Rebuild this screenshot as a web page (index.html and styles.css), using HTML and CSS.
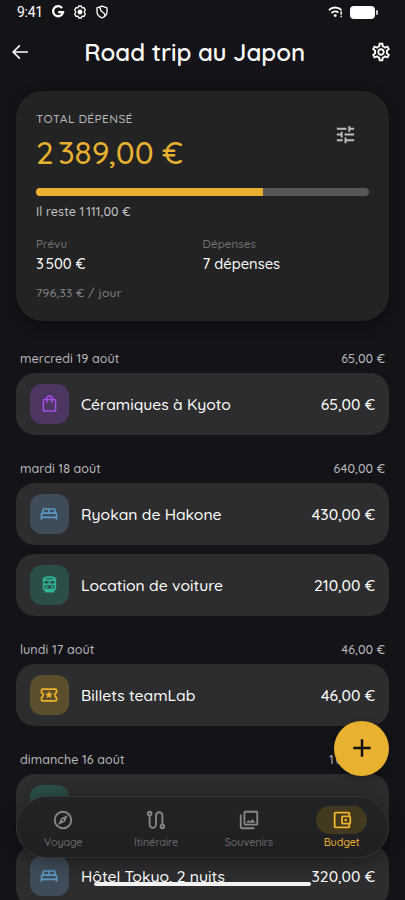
FILE: index.html
```
<!DOCTYPE html>
<html lang="fr">
<head>
<meta charset="utf-8">
<meta name="viewport" content="width=device-width, initial-scale=1">
<title>Road trip au Japon</title>
<link rel="stylesheet" href="styles.css">
</head>
<body>
<svg class="defs" width="0" height="0">
  <symbol id="gear" viewBox="0 0 24 24"><path d="M19.43 12.98c.04-.32.07-.64.07-.98 0-.34-.03-.66-.07-.98l2.11-1.65c.19-.15.24-.42.12-.64l-2-3.46c-.09-.16-.26-.25-.44-.25-.06 0-.12.01-.17.03l-2.49 1c-.52-.4-1.08-.73-1.69-.98l-.38-2.65C14.46 2.18 14.25 2 14 2h-4c-.25 0-.46.18-.49.42l-.38 2.65c-.61.25-1.17.59-1.69.98l-2.49-1c-.06-.02-.12-.03-.18-.03-.17 0-.34.09-.43.25l-2 3.46c-.13.22-.07.49.12.64l2.11 1.65c-.04.32-.07.65-.07.98 0 .33.03.66.07.98l-2.11 1.65c-.19.15-.24.42-.12.64l2 3.46c.09.16.26.25.44.25.06 0 .12-.01.17-.03l2.49-1c.52.4 1.08.73 1.69.98l.38 2.65c.03.24.24.42.49.42h4c.25 0 .46-.18.49-.42l.38-2.65c.61-.25 1.17-.59 1.69-.98l2.49 1c.06.02.12.03.18.03.17 0 .34-.09.43-.25l2-3.46c.12-.22.07-.49-.12-.64l-2.11-1.65zm-1.98-1.71c.04.31.05.52.05.73 0 .21-.02.43-.05.73l-.14 1.13.89.7 1.08.84-.7 1.21-1.27-.51-1.04-.42-.9.68c-.43.32-.84.56-1.25.73l-1.06.43-.16 1.13-.2 1.35h-1.4l-.19-1.35-.16-1.13-1.06-.43c-.43-.18-.83-.41-1.23-.71l-.91-.7-1.06.43-1.27.51-.7-1.21 1.08-.84.89-.7-.14-1.13c-.03-.31-.05-.54-.05-.74s.02-.43.05-.73l.14-1.13-.89-.7-1.08-.84.7-1.21 1.27.51 1.04.42.9-.68c.43-.32.84-.56 1.25-.73l1.06-.43.16-1.13.2-1.35h1.39l.19 1.35.16 1.13 1.06.43c.43.18.83.41 1.23.71l.91.7 1.06-.43 1.27-.51.7 1.21-1.07.85-.89.7.14 1.13zM12 8c-2.21 0-4 1.79-4 4s1.79 4 4 4 4-1.79 4-4-1.79-4-4-4zm0 6c-1.1 0-2-.9-2-2s.9-2 2-2 2 .9 2 2-.9 2-2 2z"/></symbol>
  <symbol id="bed" viewBox="0 0 24 24"><path d="M22 12c0-1.100-.9-2-2-2V7c0-1.100-.9-2-2-2H6c-1.100 0-2 .9-2 2v3c-1.100 0-2 .9-2 2v5h0v2h1.800v-2h16.400v2H22v-7zm-4-2h-5V7h5v3zM6 7h5v3H6V7zm-2 5h16v3H4v-3z"/></symbol>
  <symbol id="train" viewBox="0 0 24 24"><path fill-rule="evenodd" d="M12 1.500C7 1.500 3.500 2.500 3.500 6V16.500c0 1.900 1.300 3.200 3 3.500L6 21v1h12v-1l-.5-1c1.700-.3 3-1.600 3-3.500V6C20.500 2.500 17 1.500 12 1.500zM7.500 4h9v1.300h-9zM5.700 7.500H11v3.300H5.700zm7.300 0h5.300v3.300H13zM5.700 13h12.600v4H5.700z"/><circle cx="8.500" cy="15" r="1.300"/><circle cx="15.500" cy="15" r="1.300"/></symbol>
</svg>
<div class="screen">
  <div class="statusbar">
    <div class="status-left">
      <span class="clock">9:41</span>
      <svg width="14" height="14" viewBox="0 0 14 14" fill="none" stroke="#fff" stroke-width="2.300"><path d="M11 3.100A5 5 0 1 0 12 7.200H7.200"/></svg>
      <svg width="14" height="14" viewBox="0 0 14 14" fill="none" stroke="#fff" stroke-width="1.300" stroke-linejoin="round"><path d="M5.100 2.900L5.800 1h2.400l.7 1.900 2.100-.2 1.300 2.100L11.200 7l1.100 2.200-1.300 2.100-2.100-.2-.7 1.900H5.800l-.7-1.900-2.100.2-1.300-2.100L2.800 7 1.700 4.800 3 2.700z"/><circle cx="7" cy="7" r="1.800" fill="#fff"/></svg>
      <svg width="14" height="14" viewBox="0 0 14 14" fill="none" stroke="#fff" stroke-width="1.300" stroke-linejoin="round"><path d="M7 1.200L2 2.800v3.700c0 3 2 5.300 5 6.300 3-1 5-3.300 5-6.300V2.800zM5 2c0 3.200 1 4.200 2.800 5.200S10 9.200 9.900 11"/></svg>
    </div>
    <div class="status-right">
      <svg width="15" height="12" viewBox="0 0 15 12" fill="none" stroke="#fff" stroke-width="1.800"><path d="M.9 4.100C4.400.600 10 .600 13.500 4.100M3.600 7C5.600 5 8.500 5 10.300 6.600"/><circle cx="7.200" cy="9.600" r="1.400" fill="#fff" stroke="none"/><path d="M13.200 5.300v3.500M13.200 9.800v1.400" stroke-width="1.400"/></svg>
      <span class="battery"></span>
    </div>
  </div>

  <header class="appbar">
    <svg class="back" viewBox="0 0 24 24"><path d="M20 11.100H6.800l5.600-5.700L11.200 4.200l-7.900 7.800 7.900 7.800 1.200-1.200-5.600-5.700H20.600v-1.800z"/></svg>
    <h1>Road trip au Japon</h1>
    <svg class="settings"><use href="#gear"/></svg>
  </header>

  <section class="summary">
    <svg class="tune" viewBox="0 0 24 24"><path d="M3 17v2h6v-2H3zM3 5v2h10V5H3zm10 16v-2h8v-2h-8v-2h-2v6h2zM7 9v2H3v2h4v2h2V9H7zm14 4v-2H11v2h10zm-6-4h2V7h4V5h-4V3h-2v6z"/></svg>
    <div class="overline">TOTAL DÉPENSÉ</div>
    <div class="total">2&#8239;389,00 €</div>
    <div class="progress"><div class="progress-fill"></div></div>
    <div class="remaining">Il reste 1&#8239;111,00 €</div>
    <div class="stats">
      <div><div class="stat-label">Prévu</div><div class="stat-value">3&#8239;500 €</div></div>
      <div><div class="stat-label">Dépenses</div><div class="stat-value">7 dépenses</div></div>
    </div>
    <div class="perday">796,33 € / jour</div>
  </section>

  <main class="days">
    <section class="day">
      <div class="day-head"><span>mercredi 19 août</span><span class="day-sum">65,00 €</span></div>
      <div class="item"><span class="icon shop"><svg viewBox="0 0 24 24" fill="none" stroke="currentColor" stroke-width="1.900"><rect x="4.300" y="6.800" width="15.400" height="14.700" rx="1"/><path d="M8.800 11V5.800a3.200 3.200 0 0 1 6.400 0V11"/></svg></span><span class="name">Céramiques à Kyoto</span><span class="price">65,00 €</span></div>
    </section>
    <section class="day">
      <div class="day-head"><span>mardi 18 août</span><span class="day-sum">640,00 €</span></div>
      <div class="item"><span class="icon stay"><svg><use href="#bed"/></svg></span><span class="name">Ryokan de Hakone</span><span class="price">430,00 €</span></div>
      <div class="item"><span class="icon transit"><svg><use href="#train"/></svg></span><span class="name">Location de voiture</span><span class="price">210,00 €</span></div>
    </section>
    <section class="day">
      <div class="day-head"><span>lundi 17 août</span><span class="day-sum">46,00 €</span></div>
      <div class="item"><span class="icon fun"><svg viewBox="0 0 24 24"><path d="M22 10V6c0-1.100-.9-2-2-2H4c-1.100 0-1.990.9-1.990 2v4c1.100 0 1.990.9 1.990 2s-.89 2-2 2v4c0 1.100.9 2 2 2h16c1.100 0 2-.9 2-2v-4c-1.100 0-2-.9-2-2s.9-2 2-2zm-2-1.460c-1.190.69-2 1.990-2 3.460s.81 2.770 2 3.460V18H4v-2.540c1.190-.69 2-1.990 2-3.460 0-1.480-.8-2.770-1.990-3.460L4 6h16v2.540zM9.070 16L12 14.120 14.930 16l-.89-3.360 2.690-2.200-3.470-.21L12 7l-1.270 3.220-3.470.21 2.690 2.200z"/></svg></span><span class="name">Billets teamLab</span><span class="price">46,00 €</span></div>
    </section>
    <section class="day">
      <div class="day-head"><span>dimanche 16 août</span><span class="day-sum">1&#8239;638,00 €</span></div>
      <div class="item"><span class="icon transit"></span></div>
      <div class="item"><span class="icon stay"><svg><use href="#bed"/></svg></span><span class="name">Hôtel Tokyo, 2 nuits</span><span class="price">320,00 €</span></div>
    </section>
  </main>

  <div class="fab"><svg viewBox="0 0 24 24" stroke="#111" stroke-width="2.700"><path d="M12 2.500v19M2.500 12h19"/></svg></div>

  <nav class="tabs">
    <div class="tab"><span class="pill"><svg viewBox="0 0 24 24"><path fill-rule="evenodd" d="M12 2a10 10 0 1 0 0 20 10 10 0 0 0 0-20zm0 2a8 8 0 1 1 0 16 8 8 0 0 1 0-16zM6.500 17.500l3.500-7.500 7.500-3.500L14 14zM12 10.900a1.100 1.100 0 1 1 0 2.200 1.100 1.100 0 0 1 0-2.200z"/></svg></span><span class="label">Voyage</span></div>
    <div class="tab"><span class="pill"><svg viewBox="0 0 24 24" fill="none" stroke="currentColor" stroke-width="2"><circle cx="5" cy="5" r="2"/><circle cx="19" cy="19" r="2"/><path d="M5 7v10a3.500 3.500 0 0 0 7 0V7a3.500 3.500 0 0 1 7 0v10"/></svg></span><span class="label">Itinéraire</span></div>
    <div class="tab"><span class="pill"><svg viewBox="0 0 24 24"><path d="M20 4v12H8V4h12m0-2H8c-1.100 0-2 .9-2 2v12c0 1.100.9 2 2 2h12c1.100 0 2-.9 2-2V4c0-1.100-.9-2-2-2zm-8.500 9.670l1.690 2.260 2.480-3.100L19 15H9zM2 6v14c0 1.100.9 2 2 2h14v-2H4V6H2z"/></svg></span><span class="label">Souvenirs</span></div>
    <div class="tab active"><span class="pill"><svg viewBox="0 0 24 24"><path d="M21 7.280V5c0-1.100-.9-2-2-2H5c-1.110 0-2 .9-2 2v14c0 1.100.89 2 2 2h14c1.100 0 2-.9 2-2v-2.280c.59-.35 1-.98 1-1.720V9c0-.74-.41-1.370-1-1.720zM20 9v6h-7V9h7zM5 19V5h14v2h-6c-1.100 0-2 .9-2 2v6c0 1.100.9 2 2 2h6v2H5z"/><circle cx="16" cy="12" r="1.500"/></svg></span><span class="label">Budget</span></div>
  </nav>
  <div class="home-indicator"></div>
</div>
</body>
</html>
```
FILE: styles.css
```
* { box-sizing: border-box; }
body { margin: 0; background: #141318; color: #fff; font-family: Quicksand, Lato, "Noto Sans", sans-serif; font-weight: 500; }
.defs { position: absolute; }
svg { display: block; fill: currentColor; }
svg[fill="none"] { fill: none; }
.screen { position: relative; width: 405px; height: 900px; overflow: hidden; background: #141318; }

.statusbar { display: flex; justify-content: space-between; align-items: center; height: 24px; padding: 0 30px 0 17px; }
.status-left { display: flex; align-items: center; gap: 8px; }
.clock { font: 400 14px/24px Roboto, sans-serif; letter-spacing: -.3px; width: 26px; }
.status-right { display: flex; align-items: center; gap: 7px; height: 24px; }
.battery { position: relative; width: 25px; height: 13px; border-radius: 4px; background: #fff; }
.battery::after { content: ""; position: absolute; right: -2.500px; top: 4px; width: 1.500px; height: 5px; border-radius: 1px; background: #ccc; }

.appbar { display: flex; align-items: center; justify-content: space-between; height: 55px; padding: 0 13px 0 9px; }
.back { width: 22px; height: 22px; }
.settings { width: 22px; height: 22px; }
h1 { margin: 0 11.500px 0 0; font-size: 24px; line-height: 30px; font-weight: 600; letter-spacing: -.03px; white-space: nowrap; }

.summary { position: relative; height: 230px; margin: 12px 16px 0; padding: 20px 20px 0; border-radius: 27px; background: #232324; box-shadow: 0 4px 14px rgba(0,0,0,.35); }
.tune { position: absolute; right: 32px; top: 32px; width: 23px; height: 23px; color: #bdbdbf; }
.overline { font-size: 12px; line-height: 16px; letter-spacing: .35px; color: #b9b9bb; }
.total { margin-top: 5px; font-size: 31.500px; line-height: 40px; letter-spacing: -1px; color: #e8b130; }
.progress { margin-top: 16px; height: 8px; border-radius: 4px; background: #575758; overflow: hidden; }
.progress-fill { width: 68.300%; height: 100%; background: #e8b130; }
.remaining { margin-top: 7px; font-size: 12.500px; line-height: 17px; letter-spacing: .1px; color: #c3c3c5; }
.stats { display: grid; grid-template-columns: 1fr 1fr; margin-top: 16px; }
.stat-label { font-size: 11.500px; line-height: 16px; letter-spacing: .1px; color: #737375; }
.stat-value { margin-top: 2px; font-size: 14.700px; line-height: 20px; letter-spacing: 0; }
.perday { margin-top: 11px; font-size: 12px; line-height: 16px; letter-spacing: .3px; color: #858587; }

.days { padding: 0 16px; margin-top: 29px; }
.day { display: flex; flex-direction: column; gap: 8.500px; margin-bottom: 25px; }
.day-head { display: flex; justify-content: space-between; height: 14px; padding: 0 4px; font-size: 12.500px; line-height: 16px; letter-spacing: .1px; color: #bbbbbe; }
.item { display: flex; align-items: center; height: 62.500px; padding: 0 14px 0 13.500px; border-radius: 19px; background: #2d2d2f; flex: none; }
.icon { display: flex; align-items: center; justify-content: center; width: 39.500px; height: 39.500px; border-radius: 12px; }
.icon svg { width: 20px; height: 20px; }
.shop { color: #a44fe8; background: #4e3663; }
.icon.shop svg { width: 19px; height: 19px; }
.stay { color: #5b98c5; background: #3e4c59; }
.transit { color: #2fb394; background: #2b4e49; }
.icon.transit svg { width: 19px; height: 19px; }
.fun { color: #edb12c; background: #5b4e2c; }
.name { margin-left: 12px; font-size: 15.700px; letter-spacing: 0; flex: 1; white-space: nowrap; }
.price { font-size: 15.700px; letter-spacing: 0; white-space: nowrap; }

.fab { position: absolute; left: 334px; top: 720.500px; width: 55px; height: 55px; display: flex; align-items: center; justify-content: center; border-radius: 50%; background: #e8b130; box-shadow: 0 2px 8px rgba(0,0,0,.3); }
.fab svg { width: 22px; height: 22px; }

.tabs { position: absolute; left: 16px; right: 16px; top: 796px; height: 62px; display: grid; grid-template-columns: repeat(4, 1fr); border: 1px solid #343435; border-radius: 31px; background: linear-gradient(#232425, #1f1f21); box-shadow: 0 3px 18px rgba(0,0,0,.4); }
.tab { display: flex; flex-direction: column; align-items: center; padding-top: 9px; color: #88888a; }
.pill { display: flex; align-items: center; justify-content: center; width: 51px; height: 28px; border-radius: 14px; }
.pill svg { width: 22px; height: 22px; }
.label { margin-top: 1px; font-size: 10.800px; line-height: 14px; letter-spacing: -.1px; color: #6b6b6d; }
.active { color: #edb430; }
.active .pill { background: #43391f; }
.active .label { color: #edb430; }
.home-indicator { position: absolute; left: 94px; top: 882px; width: 217px; height: 4px; border-radius: 2px; background: #f3f3f3; }
```
